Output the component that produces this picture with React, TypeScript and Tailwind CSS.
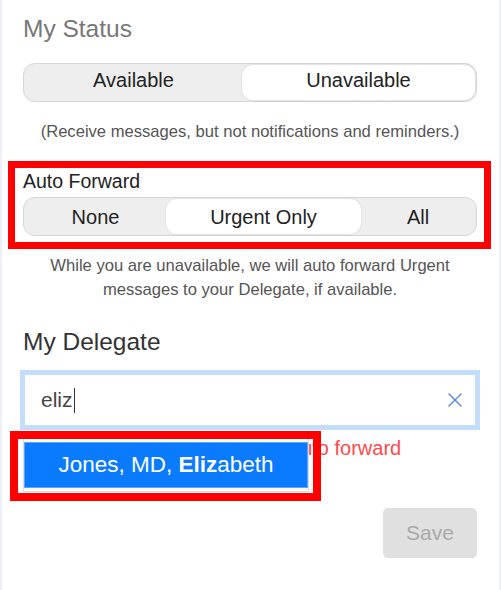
import { X } from "lucide-react"
import clsx from "clsx"

type Option = { label: string; width: string }

function Segmented({ options, value, textClass }: { options: Option[]; value: string; textClass?: string }) {
    return (
        <div className="flex h-[39px] rounded-[12px] border border-[#d6d6d6] bg-[#eeeeee] p-[1px]">
            {options.map((o) => (
                <button
                    key={o.label}
                    className={clsx(
                        "rounded-[11px] text-[20px] leading-6 text-[#222]",
                        o.width,
                        textClass,
                        o.label === value && "bg-white shadow-[0_0_2px_rgba(0,0,0,0.15)]"
                    )}
                >
                    {o.label}
                </button>
            ))}
        </div>
    )
}

export default function App() {
    return (
        <div className="relative min-h-[590px] border-x-2 border-[#edf0f8] bg-white pl-[21px] pr-[22px] pt-[15px] font-['Liberation_Sans',Arial,sans-serif]">
            <h2 className="text-[24.5px] leading-[28px] text-[#777]">My Status</h2>

            <div className="mt-[20px]">
                <Segmented
                    value="Unavailable"
                    textClass="pb-[5px]"
                    options={[
                        { label: "Available", width: "w-[217px]" },
                        { label: "Unavailable", width: "flex-1" },
                    ]}
                />
            </div>
            <p className="mt-[18px] text-center text-[16.6px] leading-6 text-[#555]">
                (Receive messages, but not notifications and reminders.)
            </p>

            <p className="mt-[25px] text-[19.5px] leading-6 text-[#222]">Auto Forward</p>
            <div className="mt-[4px]">
                <Segmented
                    value="Urgent Only"
                    options={[
                        { label: "None", width: "w-[141px]" },
                        { label: "Urgent Only", width: "w-[195px]" },
                        { label: "All", width: "flex-1" },
                    ]}
                />
            </div>
            <p className="mx-auto mt-[18px] w-[420px] text-center text-[16.6px] leading-6 text-[#555]">
                While you are unavailable, we will auto forward Urgent messages to your Delegate, if available.
            </p>

            <h2 className="mt-[26px] text-[24.5px] leading-[28px] text-[#333]">My Delegate</h2>

            <div className="relative mt-[14px]">
                <div className="-mx-[3px] flex h-[60px] items-center border-[5px] border-[#c4ddfa] bg-white pl-[16px] pr-[8px]">
                    <span className="text-[21px] leading-6 text-[#444]">eliz</span>
                    <span className="ml-[1px] h-[25px] w-px bg-[#333]" />
                    <span className="ml-auto flex text-[#5b8ddb]">
                        <X size={24} strokeWidth={1.5} />
                    </span>
                </div>

                <p className="mt-[6px] pl-[18px] text-[20px] leading-6 text-[#ff4a4a]">
                    Please select a Delegate to auto forward
                </p>

                {/* suggestion dropdown */}
                <div className="absolute left-0 top-[66px] w-[286px] border border-[#dcdcdc] bg-white pt-[5px] pb-[3px]">
                    <div className="flex h-[46px] items-center justify-center border border-[#5aa5ff] bg-[#0a7bff] text-[22.5px] text-white">
                        Jones, MD,&nbsp;<b>Eliz</b>abeth
                    </div>
                </div>
            </div>

            <div className="mt-[48px] flex justify-end">
                <button className="h-[50px] w-[94px] rounded-[5px] bg-[#e0e0e0] text-[21px] text-[#a9a9a9]">Save</button>
            </div>

            {/* annotation boxes */}
            <div className="absolute left-[6px] top-[161px] h-[88px] w-[483px] border-[7px] border-[#ff0000]" />
            <div className="absolute left-[8px] top-[431px] h-[70px] w-[311px] border-[8px] border-[#ff0000]" />
        </div>
    )
}
